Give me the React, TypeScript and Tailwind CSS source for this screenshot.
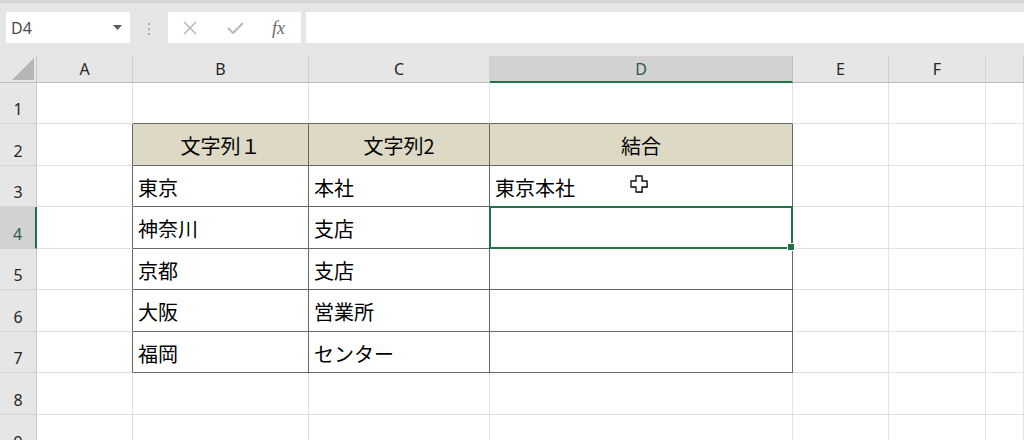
import React from "react";

const COLS = ["A", "B", "C", "D", "E", "F", "G"];
const ROWS = [1, 2, 3, 4, 5, 6, 7, 8, 9];

const DATA: Record<string, string> = {
  B2: "文字列１",
  C2: "文字列2",
  D2: "結合",
  B3: "東京",
  C3: "本社",
  D3: "東京本社",
  B4: "神奈川",
  C4: "支店",
  B5: "京都",
  C5: "支店",
  B6: "大阪",
  C6: "営業所",
  B7: "福岡",
  C7: "センター",
};

const jp = { fontFamily: '"Noto Sans CJK JP", "Noto Sans", sans-serif' };
const ui = { fontFamily: '"Noto Sans", "Open Sans", "Liberation Sans", sans-serif' };

function Cursor() {
  return (
    <svg width="20" height="19" viewBox="0 0 20 19" className="absolute left-[140px] top-[9px]">
      <polygon
        points="7,2 13,2 13,7 18,7 18,13 13,13 13,18 7,18 7,13 2,13 2,7 7,7"
        fill="#555"
        opacity="0.6"
      />
      <polygon
        points="6,1 12,1 12,6 17,6 17,12 12,12 12,17 6,17 6,12 1,12 1,6 6,6"
        fill="#fff"
        stroke="#111"
        strokeWidth="1.3"
      />
    </svg>
  );
}

function Cell({ r, c }: { r: number; c: number }) {
  const key = COLS[c] + r;
  const text = DATA[key];
  const inTable = r >= 2 && r <= 7 && c >= 1 && c <= 3;
  const darkRight = inTable || (c === 0 && r >= 2 && r <= 7);
  const darkBottom = inTable || (r === 1 && c >= 1 && c <= 3);
  const isHead = inTable && r === 2;
  const selected = key === "D4";
  return (
    <div
      className={
        "relative box-border border-r border-b flex " +
        (darkRight ? "border-r-[#666666] " : "border-r-[#e1e1e1] ") +
        (darkBottom ? "border-b-[#666666] " : "border-b-[#e1e1e1] ") +
        (isHead ? "bg-[#ddd9c4] justify-center items-center pt-[2px] " : "bg-white items-center pl-[5px] pt-[3px] ")
      }
    >
      {text && (
        <span className="text-[20px] leading-none text-black whitespace-nowrap" style={jp}>
          {text}
        </span>
      )}
      {key === "D3" && <Cursor />}
      {selected && (
        <div className="absolute -left-px -top-px -right-px -bottom-px border-2 border-[#217346] z-10">
          <div className="absolute -right-[4px] -bottom-[4px] w-[6px] h-[6px] bg-[#217346] border border-white box-content" />
        </div>
      )}
    </div>
  );
}

export default function App() {
  return (
    <div className="w-[1024px] h-[440px] overflow-hidden bg-white select-none">
      {/* formula bar area */}
      <div className="h-[56px] bg-[#e6e6e6] flex flex-col">
        <div className="h-[3px] bg-[#d6d6d6]" />
        <div className="flex pt-[9px] pl-[6px] h-[43px]">
          <div className="w-[124px] h-[31px] bg-white flex items-center justify-between pl-[5px] pr-[8px]">
            <span className="text-[16px] text-[#4a4a4a]" style={ui}>
              D4
            </span>
            <svg width="9" height="5" viewBox="0 0 9 5">
              <polygon points="0,0 9,0 4.5,5" fill="#5a5a5a" />
            </svg>
          </div>
          <div className="w-[38px] flex flex-col items-center justify-center gap-[3px]">
            <div className="w-[2px] h-[2px] bg-[#9a9a9a] rounded-full" />
            <div className="w-[2px] h-[2px] bg-[#9a9a9a] rounded-full" />
            <div className="w-[2px] h-[2px] bg-[#9a9a9a] rounded-full" />
          </div>
          <div className="w-[133px] h-[31px] bg-white flex items-center">
            <svg width="14" height="14" viewBox="0 0 14 14" className="ml-[15px]">
              <path d="M1 1 L13 13 M13 1 L1 13" stroke="#b3b3b3" strokeWidth="1.4" fill="none" />
            </svg>
            <svg width="17" height="12" viewBox="0 0 17 12" className="ml-[30px]">
              <path d="M1 6 L6 11 L16 1" stroke="#b8b8b8" strokeWidth="2" fill="none" />
            </svg>
            <span
              className="ml-[28px] text-[18px] italic text-[#6a6a6a] leading-none"
              style={{ fontFamily: '"Liberation Serif", "DejaVu Serif", serif' }}
            >
              fx
            </span>
          </div>
          <div className="ml-[5px] flex-1 h-[31px] bg-white" />
        </div>
      </div>

      {/* sheet */}
      <div className="grid grid-cols-[37px_96px_176px_181px_303px_96px_97px_1fr] grid-rows-[27px_41px_42px_41px_42px_41px_42px_41px_42px_42px]">
        {/* corner */}
        <div className="bg-[#e6e6e6] border-r border-b border-r-[#c8c8c8] border-b-[#bdbdbd] relative">
          <svg width="24" height="24" viewBox="0 0 24 24" className="absolute left-[12px] top-[2px]">
            <polygon points="22,0 22,22 0,22" fill="#b5b5b5" />
          </svg>
        </div>
        {COLS.map((c) => (
          <div
            key={c}
            className={
              "flex items-center justify-center border-r text-[16px] " +
              (c === "D"
                ? "bg-[#d2d2d2] border-b-2 border-b-[#217346] border-r-[#bdbdbd] text-[#2b5d45]"
                : "bg-[#e6e6e6] border-b border-b-[#bdbdbd] border-r-[#d0d0d0] text-[#262626]")
            }
            style={ui}
          >
            {c === "G" ? "" : c}
          </div>
        ))}
        {ROWS.map((r) => (
          <React.Fragment key={r}>
            <div
              className={
                "flex items-end justify-center pb-[2px] text-[16px] border-b " +
                (r === 4
                  ? "bg-[#d2d2d2] border-r-2 border-r-[#217346] border-b-[#d0d0d0] text-[#2b5d45]"
                  : "bg-[#e6e6e6] border-r border-r-[#c8c8c8] border-b-[#d6d6d6] text-[#262626]")
              }
              style={ui}
            >
              {r}
            </div>
            {COLS.map((_, ci) => (
              <Cell key={ci} r={r} c={ci} />
            ))}
          </React.Fragment>
        ))}
      </div>
    </div>
  );
}
